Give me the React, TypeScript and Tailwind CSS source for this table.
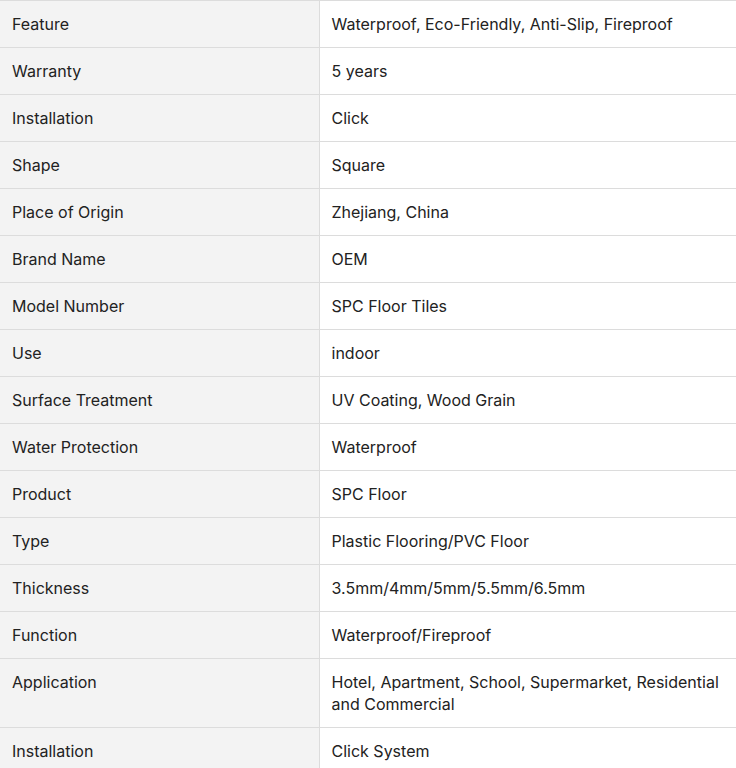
const specs: [string, string][] = [
  ["Feature", "Waterproof, Eco-Friendly, Anti-Slip, Fireproof"],
  ["Warranty", "5 years"],
  ["Installation", "Click"],
  ["Shape", "Square"],
  ["Place of Origin", "Zhejiang, China"],
  ["Brand Name", "OEM"],
  ["Model Number", "SPC Floor Tiles"],
  ["Use", "indoor"],
  ["Surface Treatment", "UV Coating, Wood Grain"],
  ["Water Protection", "Waterproof"],
  ["Product", "SPC Floor"],
  ["Type", "Plastic Flooring/PVC Floor"],
  ["Thickness", "3.5mm/4mm/5mm/5.5mm/6.5mm"],
  ["Function", "Waterproof/Fireproof"],
  ["Application", "Hotel, Apartment, School, Supermarket, Residential and Commercial"],
  ["Installation", "Click System"],
];

export default function App() {
  return (
    <div className="bg-white w-[736px] font-['Inter',sans-serif] text-[16px] leading-[22px] text-[#222]">
      <table className="w-full border-collapse table-fixed">
        <tbody>
          {specs.map(([k, v], i) => (
            <tr key={i}>
              <td className="w-[319px] bg-[#f3f3f3] border border-l-0 border-[#dcdcdc] px-3 py-3 align-top">
                {k}
              </td>
              <td className="bg-white border border-r-0 border-[#dcdcdc] px-3 py-3 align-top">
                {v}
              </td>
            </tr>
          ))}
        </tbody>
      </table>
    </div>
  );
}
